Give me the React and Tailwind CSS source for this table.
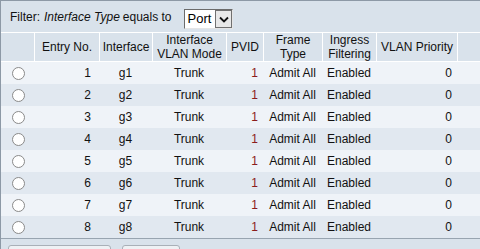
import React from 'react'

const ROWS = [1, 2, 3, 4, 5, 6, 7, 8].map((n) => ({
  entry: n,
  iface: `g${n}`,
  mode: 'Trunk',
  pvid: 1,
  frame: 'Admit All',
  ingress: 'Enabled',
  priority: 0,
}))

const COLS = 'grid grid-cols-[33px_65px_53px_74px_37px_59px_54px_81px_1fr]'

function Radio() {
  return (
    <span className="block w-[13px] h-[13px] rounded-full border border-[#8a8a8a] bg-white" />
  )
}

function HeaderCell({ children, className = '' }) {
  return (
    <div
      className={`border-l border-white flex items-center justify-center text-center leading-[14px] ${className}`}
    >
      {children}
    </div>
  )
}

export default function App() {
  return (
    <div
      className="w-[480px] h-[249px] overflow-hidden bg-[#d9e2eb] border-l border-t border-[#8d99a6] text-[12px] text-[#111]"
      style={{ fontFamily: '"Liberation Sans", Arial, sans-serif' }}
    >
      <div className="h-[31px] flex items-center pl-[9px]">
        <span>Filter:</span>
        <span className="ml-[4px] italic">Interface Type</span>
        <span className="ml-[3px]">equals to</span>
        <div className="ml-[12px] mt-[5px] flex h-[20px] border border-t-[#6b6b6b] border-l-[#6b6b6b] border-r-[#e5e5e5] border-b-[#e5e5e5] bg-white">
          <span className="px-[3px] pr-[4px] text-[13px] leading-[18px] text-black">Port</span>
          <span className="w-[17px] h-[18px] border border-[#707070] bg-[#e8e8e8] flex items-center justify-center">
            <svg width="10" height="7" viewBox="0 0 10 7">
              <path d="M1 1.5 L5 5.5 L9 1.5" fill="none" stroke="#111" strokeWidth="1.8" />
            </svg>
          </span>
        </div>
      </div>

      <div className={`${COLS} h-[30px] border-t border-b border-white`}>
        <div />
        <HeaderCell>Entry No.</HeaderCell>
        <HeaderCell>Interface</HeaderCell>
        <HeaderCell>
          Interface
          <br />
          VLAN Mode
        </HeaderCell>
        <HeaderCell>PVID</HeaderCell>
        <HeaderCell>
          Frame
          <br />
          Type
        </HeaderCell>
        <HeaderCell>
          Ingress
          <br />
          Filtering
        </HeaderCell>
        <HeaderCell>VLAN Priority</HeaderCell>
        <HeaderCell />
      </div>

      {ROWS.map((row, i) => (
        <div
          key={row.entry}
          className={`${COLS} h-[22px] items-center ${i % 2 === 0 ? 'bg-[#eff3f8]' : 'bg-[#e1e8f0]'}`}
        >
          <div className="flex justify-center pl-[1px]">
            <Radio />
          </div>
          <div className="text-right pr-[8px]">{row.entry}</div>
          <div className="text-center">{row.iface}</div>
          <div className="text-center">{row.mode}</div>
          <div className="text-right pr-[5px] text-[#8b1c1c]">{row.pvid}</div>
          <div className="text-center">{row.frame}</div>
          <div className="text-center">{row.ingress}</div>
          <div className="text-right pr-[5px]">{row.priority}</div>
          <div />
        </div>
      ))}

      <div className="border-t border-[#98a4b0] pt-[6px] pl-[7px] flex gap-[11px]">
        <div className="w-[103px] h-[24px] rounded-[3px] border border-[#a9b0b8] bg-[#eef1f4]" />
        <div className="w-[58px] h-[24px] rounded-[3px] border border-[#a9b0b8] bg-[#eef1f4]" />
      </div>
    </div>
  )
}
